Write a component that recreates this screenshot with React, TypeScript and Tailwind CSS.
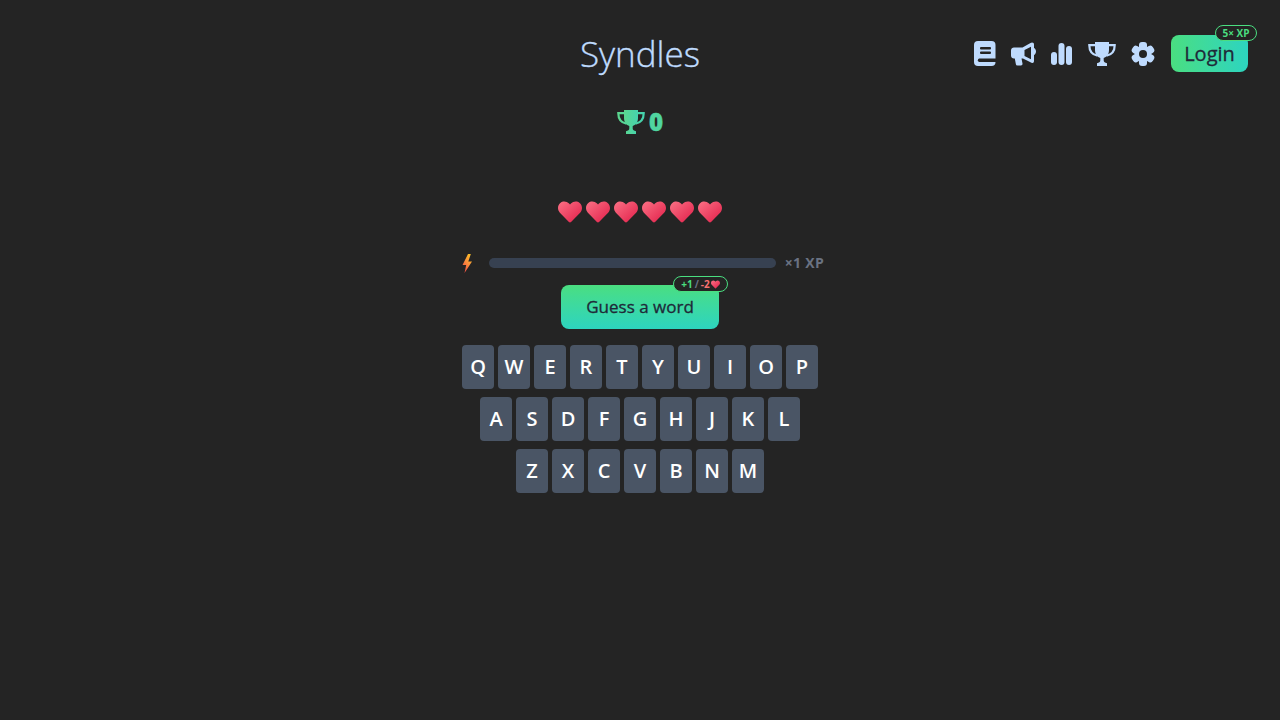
import { FaHeart } from "react-icons/fa";

const rows = ["QWERTYUIOP", "ASDFGHJKL", "ZXCVBNM"];
const font = { fontFamily: '"Open Sans", "Noto Sans", sans-serif' };
const bg = "#242424";

function Gradients() {
  return (
    <svg className="absolute h-0 w-0" aria-hidden="true">
      <defs>
        <linearGradient id="trophy" x1="0" y1="0" x2="1" y2="0">
          <stop offset="0%" stopColor="#5bd68f" />
          <stop offset="100%" stopColor="#45d3ae" />
        </linearGradient>
        <linearGradient id="heart" x1="0" y1="0" x2="1" y2="1">
          <stop offset="0%" stopColor="#fb7185" />
          <stop offset="100%" stopColor="#e11d48" />
        </linearGradient>
        <linearGradient id="bolt" x1="0.8" y1="0" x2="0.2" y2="1">
          <stop offset="0%" stopColor="#fbbf24" />
          <stop offset="45%" stopColor="#fb923c" />
          <stop offset="100%" stopColor="#ef4444" />
        </linearGradient>
      </defs>
    </svg>
  );
}

function BookIcon() {
  return (
    <svg width="22" height="25" viewBox="0 0 22 25">
      <rect width="21.5" height="25" rx="4" fill="currentColor" />
      <rect x="6" y="6" width="11" height="2.4" rx="1" fill={bg} />
      <rect x="6" y="10.5" width="11" height="2.4" rx="1" fill={bg} />
      <path d="M22 17.5H5a2 2 0 0 0 0 3.6h17z" fill={bg} />
    </svg>
  );
}

function HornIcon() {
  return (
    <svg width="25" height="25" viewBox="0 0 25 25">
      <path
        fill="currentColor"
        fillRule="evenodd"
        d="M21 1.500c1.500 0 2 .8 2 2V7c1.300.6 2 2 2 3.500S24.300 13.400 23 14v6c0 1.500-1 2.300-2.500 1.700L12 17.500H10.500l1 5c.2 1-.5 2-1.500 2H6.500c-.8 0-1.400-.6-1.600-1.300L3.800 17.500H3c-1.700 0-3-1.300-3-3V9.500C0 7.800 1.300 6.500 3 6.500h8.500L19.500 2c.5-.3 1-.5 1.500-.5zM20 5.800 13.500 9v6l6.500 3.200z"
      />
    </svg>
  );
}

function BarsIcon() {
  return (
    <svg width="22" height="22" viewBox="0 0 22 22" fill="currentColor">
      <rect x="0" y="9" width="6" height="13" rx="3" />
      <rect x="7.500" y="0" width="6" height="22" rx="3" />
      <rect x="15" y="3" width="6" height="19" rx="3" />
    </svg>
  );
}

function TrophyIcon({ paint, width, height }: { paint: string; width: number; height: number }) {
  return (
    <svg width={width} height={height} viewBox="0 0 28 24">
      <path
        fill={paint}
        d="M7 0H21V8C21 12.500 18.500 15 15.700 16V18.500C15.700 20 17 20.800 19 21.300V24H9V21.300C11 20.800 12.300 20 12.300 18.500V16C9.500 15 7 12.500 7 8Z"
      />
      <path
        fill="none"
        stroke={paint}
        strokeWidth="2.200"
        d="M7 3.200H1.300C1.300 8.500 4 12.500 9.500 13.700M21 3.200H26.700C26.700 8.500 24 12.500 18.500 13.700"
      />
    </svg>
  );
}

function CogIcon() {
  return (
    <svg width="24" height="24" viewBox="0 0 24 24" fill="currentColor">
      <rect x="8" y="0" width="8" height="24" rx="3" />
      <rect x="8" y="0" width="8" height="24" rx="3" transform="rotate(60 12 12)" />
      <rect x="8" y="0" width="8" height="24" rx="3" transform="rotate(120 12 12)" />
      <circle cx="12" cy="12" r="8" />
      <circle cx="12" cy="12" r="4" fill={bg} />
    </svg>
  );
}

function BoltIcon() {
  return (
    <svg width="11" height="19" viewBox="0 0 11 19">
      <path fill="url(#bolt)" d="M6 0 0.500 11H4.200L2.500 19 10 7.500H6.300L8.800 0Z" />
    </svg>
  );
}

export default function App() {
  return (
    <div className="flex min-h-screen flex-col items-center bg-[#242424]" style={font}>
      <Gradients />
      <header className="grid h-[107px] w-full grid-cols-[1fr_auto_1fr] items-start">
        <div />
        <h1 className="mt-[30px] text-[35px] leading-[48px] font-light text-[#bfdbfe] [-webkit-text-stroke:0.35px_#bfdbfe]">Syndles</h1>
        <div className="mt-[35px] flex items-center justify-end gap-[15px] pr-[32px] text-[#bfdbfe]">
          <BookIcon />
          <HornIcon />
          <BarsIcon />
          <TrophyIcon paint="currentColor" width={28} height={24} />
          <CogIcon />
          <button className="relative ml-px h-[37px] w-[77px] rounded-lg bg-gradient-to-r from-[#4ade80] to-[#2dd4bf] text-xl font-normal text-gray-800 [-webkit-text-stroke:0.3px_#1f2937]">
            Login
            <span className="absolute -top-[10px] -right-[9px] flex h-[16px] w-[42px] items-center justify-center rounded-full border border-[#4ade80] bg-[#242424] text-[10px] font-bold text-[#4ade80] [-webkit-text-stroke:0]">
              5× XP
            </span>
          </button>
        </div>
      </header>

      <div className="flex h-[30px] items-center gap-[4px]">
        <TrophyIcon paint="url(#trophy)" width={28} height={24} />
        <span className="text-2xl font-extrabold text-[#50d5a0] [-webkit-text-stroke:0.5px_#50d5a0]">0</span>
      </div>

      <div className="mt-[63px] flex h-[24px] items-center gap-[4px]">
        {[0, 1, 2, 3, 4, 5].map((i) => (
          <FaHeart key={i} className="h-[24px] w-[24px]" fill="url(#heart)" />
        ))}
      </div>

      <div className="mt-[29px] flex h-[20px] w-[368px] items-center">
        <span className="ml-[6px] flex w-[11px]">
          <BoltIcon />
        </span>
        <div className="ml-[16px] h-[10px] w-[287px] rounded-full bg-[#374151]" />
        <span className="ml-[9px] text-sm font-bold tracking-[0.3px] whitespace-nowrap text-gray-500">×1 XP</span>
      </div>

      <button className="relative mt-[12px] h-[44px] w-[158px] rounded-lg bg-gradient-to-b from-[#4ade80] to-[#2dd4bf] text-[17px] font-normal text-gray-800 [-webkit-text-stroke:0.3px_#1f2937]">
        Guess a word
        <span className="absolute -top-[9px] -right-[9px] flex h-[16px] w-[55px] items-center justify-center rounded-full border border-[#4ade80] bg-[#242424] text-[10px] font-bold [-webkit-text-stroke:0]">
          <span className="text-[#4ade80]">+1</span>
          <span className="mx-[2px] text-gray-500">/</span>
          <span className="text-[#f87171]">-2</span>
          <FaHeart className="ml-px h-[9px] w-[9px] shrink-0" fill="url(#heart)" />
        </span>
      </button>

      <div className="mt-[16px] flex flex-col items-center gap-[8px]">
        {rows.map((row) => (
          <div key={row} className="flex gap-[4px]">
            {row.split("").map((letter) => (
              <button key={letter} className="h-[44px] w-[32px] rounded bg-gray-600 text-xl font-semibold text-white">
                {letter}
              </button>
            ))}
          </div>
        ))}
      </div>
    </div>
  );
}
